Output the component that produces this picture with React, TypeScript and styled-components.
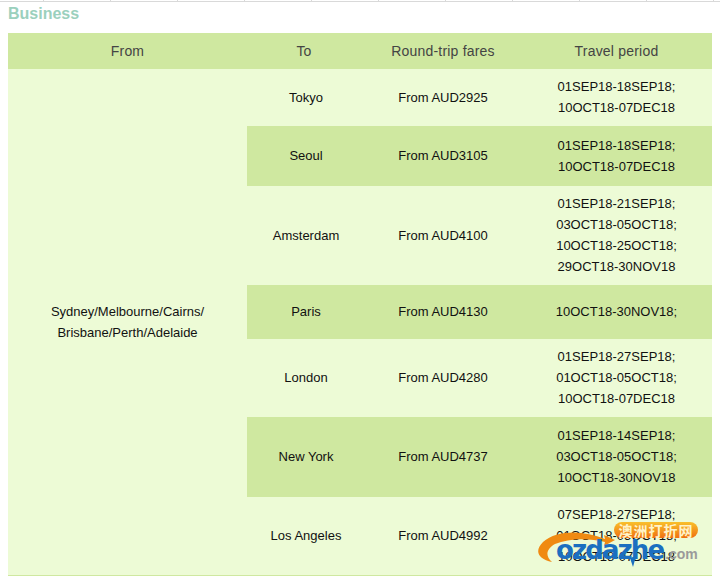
import React from "react";
import styled, { createGlobalStyle } from "styled-components";

const Global = createGlobalStyle`
  html, body { margin: 0; padding: 0; background: #fff; }
  body { font-family: "Liberation Sans", Arial, sans-serif; overflow: hidden; }
`;

const Page = styled.div`
  position: relative;
  width: 720px;
  height: 578px;
  overflow: hidden;
`;

const TopRule = styled.div`
  height: 2px;
  background:
    linear-gradient(#d9d9d9, #d9d9d9) 0 1px / 100% 1px no-repeat,
    repeating-linear-gradient(90deg, transparent 0, transparent 43px, #d9d9d9 43px, #d9d9d9 44px, transparent 44px, transparent 67px);
`;

const Heading = styled.h2`
  margin: 0;
  padding: 4px 8px 0;
  height: 27px;
  box-sizing: content-box;
  font-size: 16px;
  line-height: 16px;
  font-weight: bold;
  color: #9bd0bd;
`;

const Table = styled.table`
  margin-left: 8px;
  width: 704px;
  border-collapse: collapse;
  table-layout: fixed;
  border-bottom: 1px solid #cfe8a0;
`;

const HeadCell = styled.th<{ $inset?: number }>`
  height: 36px;
  padding: 0 ${(p) => p.$inset ?? 0}px 0 0;
  background: #cfe8a0;
  color: #444;
  font-size: 14px;
  font-weight: normal;
  letter-spacing: 0.2px;
  text-align: center;
  vertical-align: middle;
`;

const Row = styled.tr<{ $h: number }>`
  height: ${(p) => p.$h}px;
`;

const Cell = styled.td<{ $dark?: boolean }>`
  padding: 0 0 1px;
  background: ${(p) => (p.$dark ? "#cfe8a0" : "#edfbd6")};
  color: #111;
  font-size: 13px;
  line-height: 21px;
  text-align: center;
  vertical-align: middle;
`;

const OriginCell = styled(Cell)`
  padding: 0;
`;

const Watermark = styled.div`
  position: absolute;
  left: 535px;
  top: 520px;
  width: 165px;
  height: 52px;
`;

const Swoosh = styled.svg`
  position: absolute;
  left: 0;
  top: 0;
`;

const Badge = styled.div`
  position: absolute;
  left: 79px;
  top: 2px;
  width: 84px;
  height: 16px;
  border-radius: 8px;
  background: linear-gradient(#f9c02c, #ef6f10);
  color: #fff3c8;
  font-family: "Noto Sans CJK SC", sans-serif;
  font-size: 14px;
  font-weight: bold;
  line-height: 16px;
  text-align: center;
  letter-spacing: 1px;
  white-space: nowrap;
`;

const Brand = styled.div`
  position: absolute;
  left: 21px;
  top: 15px;
  color: #1b6fc0;
  font-family: "DejaVu Sans", sans-serif;
  font-size: 26px;
  line-height: 30px;
  font-weight: bold;
  letter-spacing: -1.9px;
  white-space: nowrap;
`;

const BrandTld = styled.span`
  margin-left: 2px;
  color: #9a9a9a;
  font-family: "Liberation Sans", sans-serif;
  font-size: 14px;
  font-weight: bold;
  letter-spacing: 0;
`;

type Fare = { to: string; fare: string; periods: string[]; h: number };

const fares: Fare[] = [
  { to: "Tokyo", fare: "From AUD2925", periods: ["01SEP18-18SEP18;", "10OCT18-07DEC18"], h: 57 },
  { to: "Seoul", fare: "From AUD3105", periods: ["01SEP18-18SEP18;", "10OCT18-07DEC18"], h: 60 },
  { to: "Amsterdam", fare: "From AUD4100", periods: ["01SEP18-21SEP18;", "03OCT18-05OCT18;", "10OCT18-25OCT18;", "29OCT18-30NOV18"], h: 99 },
  { to: "Paris", fare: "From AUD4130", periods: ["10OCT18-30NOV18;"], h: 54 },
  { to: "London", fare: "From AUD4280", periods: ["01SEP18-27SEP18;", "01OCT18-05OCT18;", "10OCT18-07DEC18"], h: 78 },
  { to: "New York", fare: "From AUD4737", periods: ["01SEP18-14SEP18;", "03OCT18-05OCT18;", "10OCT18-30NOV18"], h: 80 },
  { to: "Los Angeles", fare: "From AUD4992", periods: ["07SEP18-27SEP18;", "01OCT18-05OCT18;", "10OCT18-07DEC18"], h: 78 },
];

export default function App() {
  return (
    <Page>
      <Global />
      <TopRule />
      <Heading>Business</Heading>
      <Table>
        <colgroup>
          <col style={{ width: 239 }} />
          <col style={{ width: 118 }} />
          <col style={{ width: 156 }} />
          <col style={{ width: 191 }} />
        </colgroup>
        <thead>
          <tr>
            <HeadCell>From</HeadCell>
            <HeadCell $inset={4}>To</HeadCell>
            <HeadCell>Round-trip fares</HeadCell>
            <HeadCell>Travel period</HeadCell>
          </tr>
        </thead>
        <tbody>
          {fares.map((f, i) => {
            const dark = i % 2 === 1;
            return (
              <Row key={f.to} $h={f.h}>
                {i === 0 && (
                  <OriginCell rowSpan={fares.length}>
                    Sydney/Melbourne/Cairns/
                    <br />
                    Brisbane/Perth/Adelaide
                  </OriginCell>
                )}
                <Cell $dark={dark}>{f.to}</Cell>
                <Cell $dark={dark}>{f.fare}</Cell>
                <Cell $dark={dark}>
                  {f.periods.map((p, j) => (
                    <React.Fragment key={p}>
                      {j > 0 && <br />}
                      {p}
                    </React.Fragment>
                  ))}
                </Cell>
              </Row>
            );
          })}
        </tbody>
      </Table>
      <Watermark>
        <Swoosh width="165" height="52" viewBox="0 0 165 52">
          <path d="M70 19 C48 10 22 10 8 22 C-1 31 3 39 17 42 C10 36 11 29 20 24 C34 18 54 18 70 22 L69 26 L80 20 L69 15 Z" fill="#f08a12" />
          <path d="M95 38 L101 36 L98 47 Z" fill="#1b6fc0" />
        </Swoosh>
        <Badge>澳洲打折网</Badge>
        <Brand>
          ozdazhe<BrandTld>.com</BrandTld>
        </Brand>
      </Watermark>
    </Page>
  );
}
